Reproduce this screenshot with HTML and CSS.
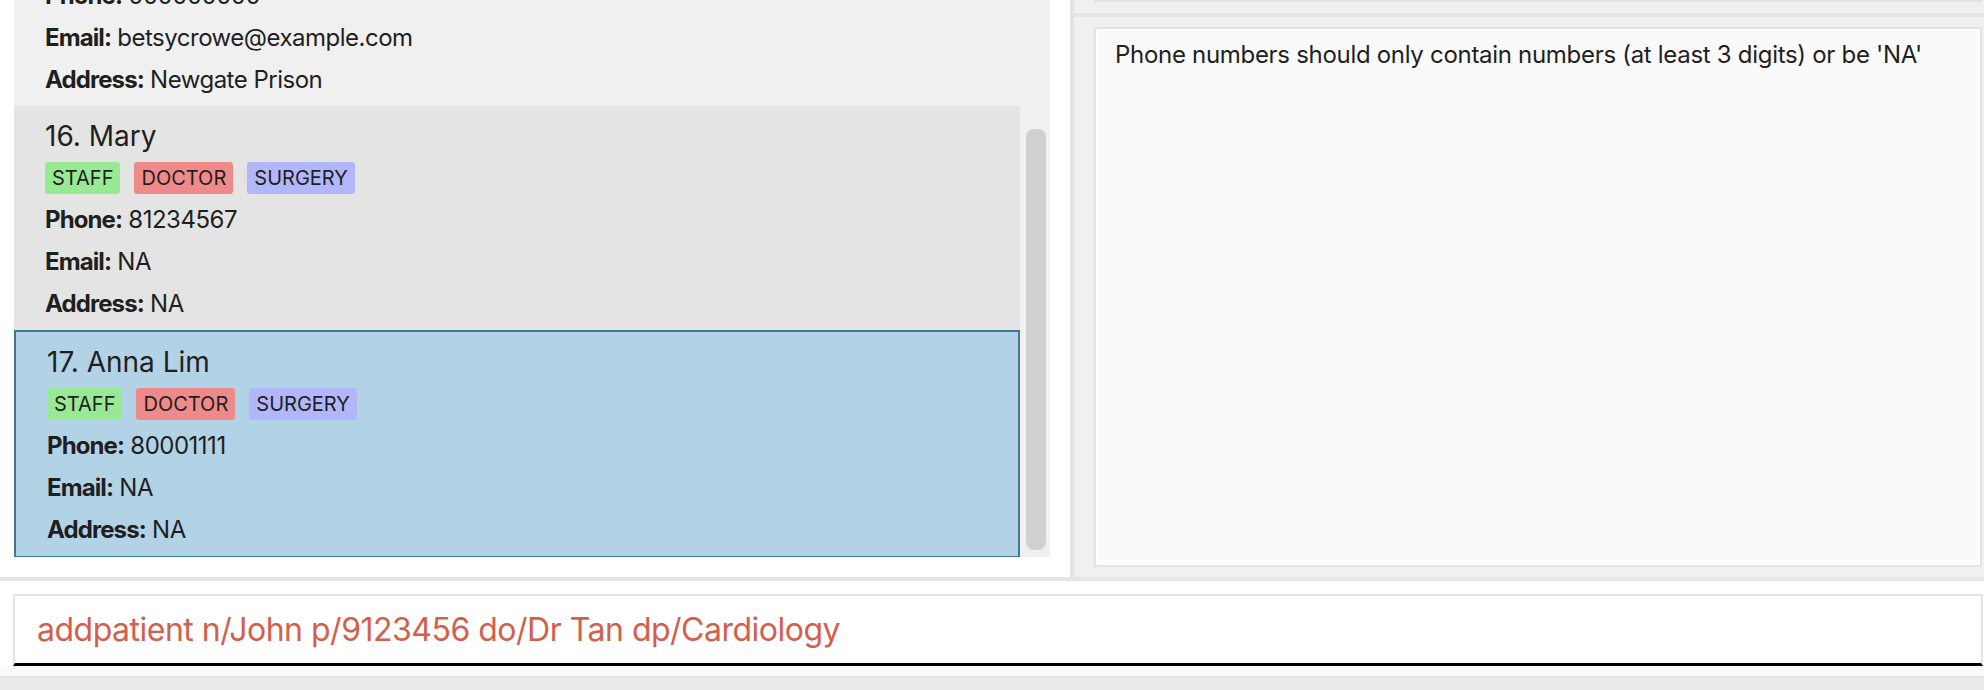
FILE: index.html
```html
<!DOCTYPE html>
<html>
<head>
<meta charset="utf-8">
<link rel="stylesheet" href="styles.css">
</head>
<body>
<div class="app">
  <div class="main">
    <div class="left-pane">
      <div class="list">
        <div class="cards">
          <div class="cards-inner">
            <div class="card card-light">
              <div class="name">15. Betsy Crowe</div>
              <div class="tags"><span class="tag tag-patient">PATIENT</span></div>
              <div class="line"><b>Phone:</b> 000000000</div>
              <div class="line"><b>Email:</b> betsycrowe@example.com</div>
              <div class="line"><b>Address:</b> Newgate Prison</div>
            </div>
            <div class="card card-dark">
              <div class="name">16. Mary</div>
              <div class="tags"><span class="tag tag-staff">STAFF</span><span class="tag tag-doctor">DOCTOR</span><span class="tag tag-surgery">SURGERY</span></div>
              <div class="line"><b>Phone:</b> 81234567</div>
              <div class="line"><b>Email:</b> NA</div>
              <div class="line"><b>Address:</b> NA</div>
            </div>
            <div class="card card-selected">
              <div class="name">17. Anna Lim</div>
              <div class="tags"><span class="tag tag-staff">STAFF</span><span class="tag tag-doctor">DOCTOR</span><span class="tag tag-surgery">SURGERY</span></div>
              <div class="line"><b>Phone:</b> 80001111</div>
              <div class="line"><b>Email:</b> NA</div>
              <div class="line"><b>Address:</b> NA</div>
            </div>
          </div>
        </div>
        <div class="scrollbar"><div class="thumb"></div></div>
      </div>
    </div>
    <div class="right-pane">
      <div class="top-section"><div class="top-box"></div></div>
      <div class="result-section">
        <div class="result-box">Phone numbers should only contain numbers (at least 3 digits) or be 'NA'</div>
      </div>
    </div>
  </div>
  <div class="command-area">
    <div class="command-box">addpatient n/John p/9123456 do/Dr Tan dp/Cardiology</div>
  </div>
  <div class="status-bar"></div>
</div>
</body>
</html>
```
FILE: styles.css
```css
html, body {
  margin: 0;
  padding: 0;
}
body {
  width: 1984px;
  height: 690px;
  overflow: hidden;
  background: #ffffff;
  font-family: Inter, "Noto Sans", "Liberation Sans", sans-serif;
  color: #1f1f1f;
}
.app {
  display: flex;
  flex-direction: column;
  height: 690px;
}
.main {
  display: flex;
  height: 577px;
  border-bottom: 4px solid #e4e4e4;
}
.left-pane {
  width: 1036px;
  height: 557px;
  padding: 0 20px 20px 14px;
  background: #ffffff;
  border-right: 4px solid #e4e4e4;
}
.list {
  display: flex;
  height: 557px;
  background: #f0f0f0;
}
.cards {
  width: 1006px;
  overflow: hidden;
}
.cards-inner {
  margin-top: -118px;
}
.card {
  padding: 14px 27px 5px 31px;
  height: 224px;
  box-sizing: border-box;
}
.card-light { background: #f0f0f0; }
.card-dark { background: #e4e4e4; }
.card-selected {
  background: #b2d2e6;
  border: 2px solid #3d7a90;
  height: 228px;
}
.name {
  font-size: 28px;
  line-height: 32px;
  white-space: nowrap;
}
.tags {
  display: flex;
  gap: 14px;
  margin-top: 10px;
  height: 32px;
}
.tag {
  font-size: 20px;
  line-height: 32px;
  padding: 0 7px;
  border-radius: 3px;
}
.tag-staff { background: #98e994; }
.tag-doctor { background: #ef8a8a; }
.tag-surgery { background: #b2b6fb; }
.tag-patient { background: #f5d58a; }
.tags + .line { margin-top: 5px; }
.line {
  font-size: 24px;
  line-height: 42px;
  letter-spacing: -0.5px;
  white-space: nowrap;
}
.line b {
  font-weight: 700;
  letter-spacing: -0.9px;
}
.scrollbar {
  width: 30px;
  padding: 129px 4px 7px 6px;
  box-sizing: border-box;
  display: flex;
}
.thumb {
  flex: 1;
  background: #d0d0d0;
  border-radius: 8px;
}
.right-pane {
  flex: 1;
  background: #f0f0f0;
  display: flex;
  flex-direction: column;
}
.top-section {
  height: 13px;
  padding: 0 2px 0 20px;
  border-bottom: 4px solid #e4e4e4;
}
.top-box {
  height: 0;
  border: 2px solid #e3e3e3;
  border-top: none;
  background: #fafafa;
}
.result-section {
  flex: 1;
  padding: 10px 2px 10px 20px;
  display: flex;
}
.result-box {
  flex: 1;
  border: 2px solid #e3e3e3;
  box-shadow: inset 0 0 0 2px #ffffff;
  background: #fafafa;
  padding: 11px 19px;
  font-size: 24px;
  line-height: 29px;
  letter-spacing: -0.3px;
  white-space: nowrap;
}
.command-area {
  height: 97px;
  padding: 13px 1px 0 13px;
  box-sizing: border-box;
  background: linear-gradient(#ffffff 85px, #fbfbfb 85px);
  border-bottom: 2px solid #e4e4e4;
}
.command-box {
  height: 72px;
  box-sizing: border-box;
  border: 2px solid #e4e4e4;
  border-bottom: 3px solid #000000;
  background: #ffffff;
  padding: 0 22px;
  font-size: 32px;
  line-height: 67px;
  color: #d2604c;
  letter-spacing: -0.5px;
  white-space: nowrap;
}
.status-bar {
  flex: 1;
  background: #ebebeb;
}
```
